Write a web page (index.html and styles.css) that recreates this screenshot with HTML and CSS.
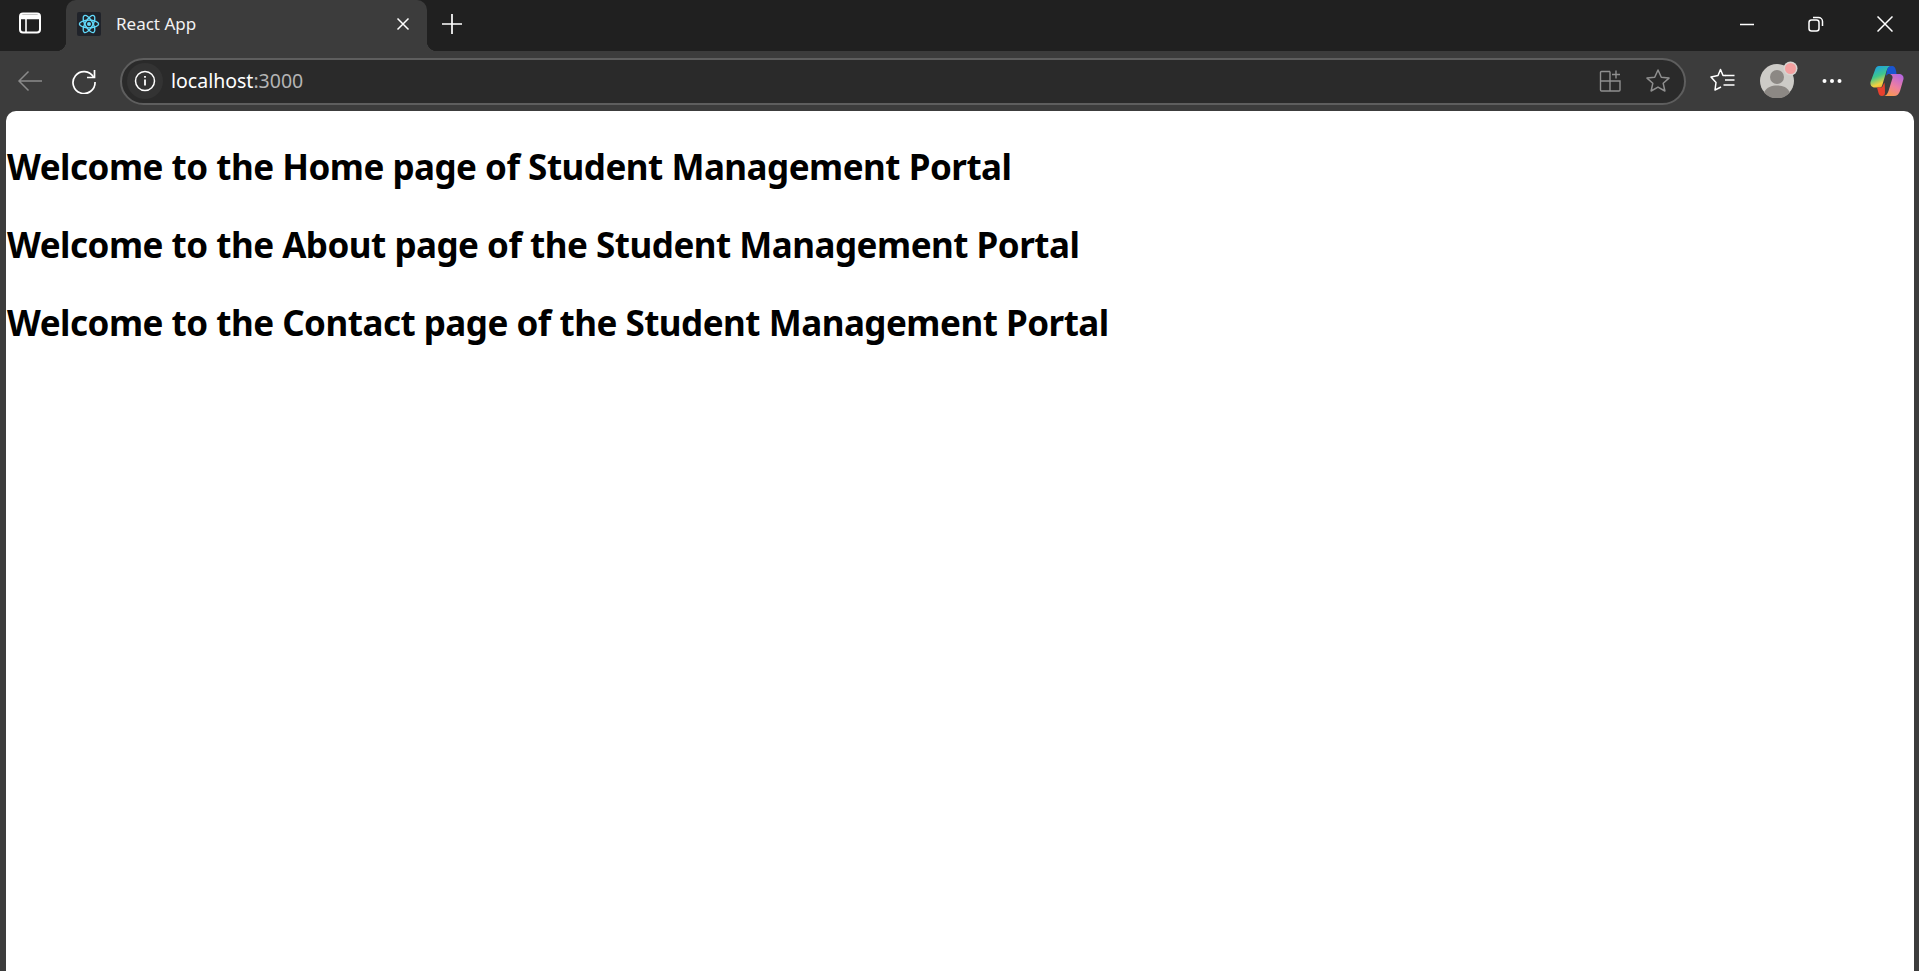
FILE: index.html
```html
<!DOCTYPE html>
<html lang="en">
<head>
    <meta charset="UTF-8">
    <meta name="viewport" content="width=device-width, initial-scale=1.0">
    <title>React App</title>
    <link rel="stylesheet" href="styles.css">
</head>
<body>
    <div class="tabstrip">
        <div class="tab-actions">
            <svg class="icon" width="24" height="24" viewBox="0 0 24 24" fill="none" stroke="#fff" stroke-width="2"><rect x="2" y="2.5" width="20" height="19" rx="3"/><path d="M2 7.5h20M8 7.5v14" stroke-width="1.6"/><path d="M3 3.5h18v3.500H3z" fill="#fff" stroke="none"/></svg>
        </div>
        <div class="tab">
            <span class="favicon">
                <svg width="22" height="22" viewBox="0 0 24 24" fill="none" stroke="#61dafb" stroke-width="1.500"><ellipse cx="12" cy="12" rx="10.500" ry="4.200"/><ellipse cx="12" cy="12" rx="10.500" ry="4.200" transform="rotate(60 12 12)"/><ellipse cx="12" cy="12" rx="10.500" ry="4.200" transform="rotate(120 12 12)"/><circle cx="12" cy="12" r="2.200" fill="#61dafb" stroke="none"/></svg>
            </span>
            <span class="tab-title">React App</span>
            <svg class="tab-close" width="14" height="14" viewBox="0 0 14 14" stroke="#fff" stroke-width="1.500"><path d="M1.500 1.500l11 11M12.500 1.500l-11 11"/></svg>
        </div>
        <svg class="new-tab" width="22" height="22" viewBox="0 0 22 22" stroke="#fff" stroke-width="1.700"><path d="M11 1v20M1 11h20"/></svg>
        <div class="window-controls">
            <svg width="16" height="16" viewBox="0 0 16 16" stroke="#fff" stroke-width="1.500"><path d="M1 8.500h14"/></svg>
            <svg width="16" height="16" viewBox="0 0 16 16" fill="none" stroke="#fff" stroke-width="1.500"><rect x="1" y="4" width="10" height="11" rx="2.500"/><path d="M5 1.500h5.500A4 4 0 0 1 14.500 5.500V10"/></svg>
            <svg width="16" height="16" viewBox="0 0 16 16" stroke="#fff" stroke-width="1.500"><path d="M.5.500l15 15M15.500.500l-15 15"/></svg>
        </div>
    </div>

    <div class="toolbar">
        <svg class="nav-btn" width="26" height="22" viewBox="0 0 26 22" fill="none" stroke="#8a8a8a" stroke-width="1.500"><path d="M25 11H2M11.500 1.500L2 11l9.500 9.500"/></svg>
        <svg class="nav-btn" width="26" height="26" viewBox="0 0 26 26" fill="none" stroke="#fff" stroke-width="1.700"><path d="M22.500 9A11 11 0 1 0 24 14"/><path d="M23.500 2v7.500H16"/></svg>
        <div class="address-bar">
            <span class="site-info">
                <svg width="22" height="22" viewBox="0 0 22 22" fill="none" stroke="#fff" stroke-width="1.500"><circle cx="11" cy="11" r="9.500"/><path d="M11 9.500v6M11 6v1.800" stroke-width="1.800"/></svg>
            </span>
            <span class="url">localhost<span class="url-port">:3000</span></span>
            <svg class="addr-icon" width="24" height="24" viewBox="0 0 24 24" fill="none" stroke="#8f8f8f" stroke-width="1.400"><path d="M12 2.500H3.500a1 1 0 0 0-1 1V21a1 1 0 0 0 1 1h17.500a1 1 0 0 0 1-1V12H2.500M12 2.500V22"/><path d="M18 1.500v8M14 5.500h8"/></svg>
            <svg class="addr-icon" width="26" height="26" viewBox="0 0 26 26" fill="none" stroke="#8f8f8f" stroke-width="1.500" stroke-linejoin="round"><path d="M13 2l3.300 7.300 7.700.8-5.800 5.200 1.700 7.700L13 19.100 6.100 23l1.700-7.700L2 10.100l7.700-.8z"/></svg>
        </div>
        <div class="toolbar-right">
            <svg width="26" height="26" viewBox="0 0 26 26" fill="none" stroke="#fff" stroke-width="1.500" stroke-linejoin="round"><path d="M15.500 7.500h-2.500L10.500 1.500 8 7.500 1 9l5 5.500-1 7.500 6-3"/><path d="M15 7.500h9.500M15 12h9.500M13.500 17h11"/></svg>
            <span class="avatar">
                <svg width="34" height="34" viewBox="0 0 34 34"><circle cx="17" cy="17" r="17" fill="#cdcbc7"/><circle cx="17" cy="13" r="7" fill="#8c8884"/><path d="M4 28.500C7 23 11.500 21.500 17 21.500S27 23 30 28.500A17 17 0 0 1 4 28.500z" fill="#8c8884"/></svg>
                <span class="avatar-dot"></span>
            </span>
            <svg class="more" width="20" height="6" viewBox="0 0 20 6" fill="#fff"><circle cx="2.500" cy="3" r="2"/><circle cx="10" cy="3" r="2"/><circle cx="17.500" cy="3" r="2"/></svg>
            <svg class="copilot" width="34" height="32" viewBox="0 0 34 32">
                <defs>
                    <linearGradient id="copA" x1="0.2" y1="0" x2="0.6" y2="1"><stop offset="0" stop-color="#1b9de8"/><stop offset=".45" stop-color="#3fc78c"/><stop offset=".8" stop-color="#f4d03f"/><stop offset="1" stop-color="#f0a03a"/></linearGradient>
                    <linearGradient id="copB" x1="0.8" y1="0" x2="0.3" y2="1"><stop offset="0" stop-color="#b565e0"/><stop offset=".55" stop-color="#ee7fa0"/><stop offset="1" stop-color="#f99a4e"/></linearGradient>
                </defs>
                <path d="M9 1h13c-3 0-4.500 2-5.500 5L12 21c-.5 1-1.500 1.500-3 1.500H5C1.500 22.500 0 20 .5 17L5 5c.8-2.500 2-4 4-4z" fill="url(#copA)"/>
                <path d="M19 9h9.500c3.500 0 5.500 2 5 5L30 26c-1 3-3 5-6 5H13c3 0 4.500-2 5.500-5l4-13c.5-2-1.500-4-3.500-4z" fill="url(#copB)"/>
                <path d="M22 1c2 0 4 1.500 4.500 8H19c-1 0-2 .5-3 2l1-6c.8-2.500 2-4 5-4z" fill="#1a55d0"/>
                <path d="M7 22.500h3c2 0 2.500-.5 3-2l1.500-3c.5 4 .5 9 .5 10 0 2-1 3.500-3 3.500-2 0-3-1-3.500-3z" fill="#e8402e"/>
            </svg>
        </div>
    </div>

    <main class="page">
        <h1>Welcome to the Home page of Student Management Portal</h1>
        <h1>Welcome to the About page of the Student Management Portal</h1>
        <h1>Welcome to the Contact page of the Student Management Portal</h1>
    </main>
</body>
</html>
```

FILE: styles.css
```css
* {
    box-sizing: border-box;
}
html, body {
    height: 100%;
}
body {
    margin: 0;
    background: #3c3c3c;
    font-family: "Noto Sans", "Open Sans", sans-serif;
    display: flex;
    flex-direction: column;
    overflow: hidden;
}
svg {
    display: block;
    flex: none;
}

/* tab strip */
.tabstrip {
    height: 51px;
    flex: none;
    background: #202020;
    display: flex;
    align-items: center;
}
.tab-actions {
    width: 66px;
    height: 100%;
    padding: 11px 0 0 18px;
}
.tab {
    position: relative;
    width: 361px;
    height: 100%;
    background: #3c3c3c;
    border-radius: 10px 10px 0 0;
    display: flex;
    align-items: center;
    padding: 0 17px 3px 11px;
    color: #fff;
}
/* concave bottom corners */
.tab::before, .tab::after {
    content: "";
    position: absolute;
    bottom: 0;
    width: 10px;
    height: 10px;
}
.tab::before {
    left: -10px;
    background: radial-gradient(circle at 0 0, #202020 10px, #3c3c3c 10.5px);
}
.tab::after {
    right: -10px;
    background: radial-gradient(circle at 100% 0, #202020 10px, #3c3c3c 10.5px);
}
.favicon {
    width: 24px;
    height: 24px;
    background: #20232a;
    border-radius: 2px;
    display: flex;
    align-items: center;
    justify-content: center;
}
.tab-title {
    flex: 1;
    margin: 0 0 2px 15px;
    font-size: 17px;
    color: #f2f2f2;
}
.new-tab {
    margin: 0 0 3px 14px;
}
.window-controls {
    margin: 0 0 3px auto;
    display: flex;
    align-items: center;
    gap: 53px;
    padding-right: 26px;
}

/* toolbar */
.toolbar {
    height: 60px;
    flex: none;
    display: flex;
    align-items: center;
    padding: 0 15px 0 17px;
}
.nav-btn + .nav-btn {
    margin-left: 28px;
}
.address-bar {
    width: 1566px;
    height: 47px;
    margin-left: 23px;
    background: #2a2a2a;
    border: 2px solid #5e5e5e;
    border-radius: 24px;
    display: flex;
    align-items: center;
    padding: 0 13px 0 5px;
}
.site-info {
    width: 36px;
    height: 36px;
    border-radius: 50%;
    background: #333;
    display: flex;
    align-items: center;
    justify-content: center;
}
.url {
    flex: 1;
    margin: 0 0 1px 8px;
    font-size: 19.5px;
    color: #fff;
}
.url-port {
    color: #b4b4b4;
}
.addr-icon + .addr-icon {
    margin-left: 23px;
}
.toolbar-right {
    display: flex;
    align-items: center;
    margin-left: 24px;
    gap: 24px;
}
.avatar {
    position: relative;
    display: block;
}
.avatar-dot {
    position: absolute;
    top: -1px;
    right: -2px;
    width: 11px;
    height: 11px;
    border-radius: 50%;
    background: #f4a0a0;
    box-shadow: 0 0 0 1.500px #d8d4d0;
}
.more {
    margin-left: 4px;
}
.copilot {
    margin-left: 4px;
}

/* page */
.page {
    flex: 1;
    margin: 0 5px 0 6px;
    background: #fff;
    border-radius: 10px 10px 0 0;
    color: #000;
    padding: 4px 0 0 1px;
}
.page h1 {
    margin: 26px 0 0;
    font-size: 35px;
    line-height: 52px;
    font-weight: 700;
    letter-spacing: -0.5px;
}
```
